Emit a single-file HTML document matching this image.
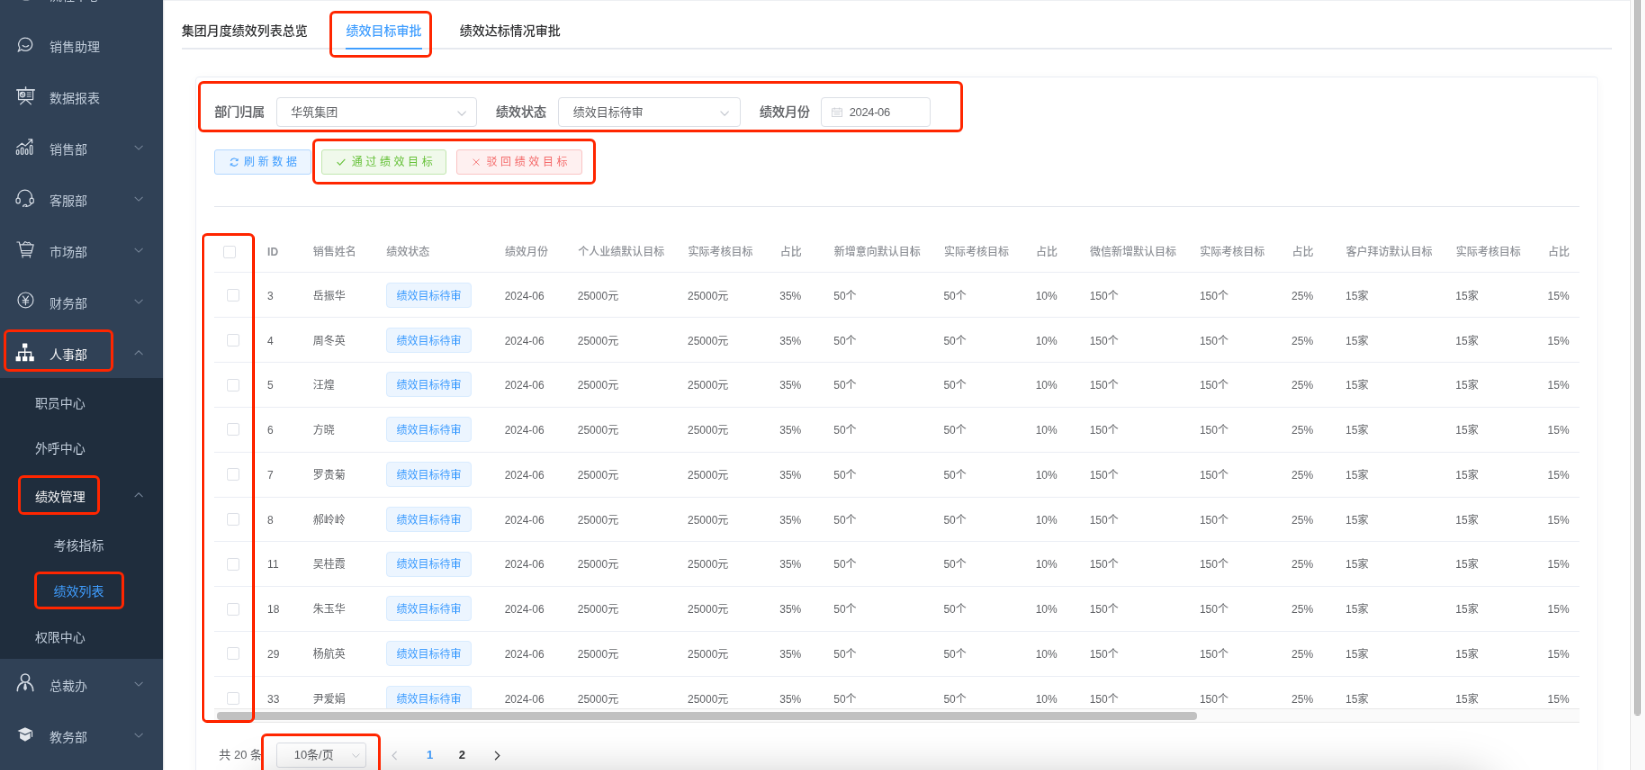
<!DOCTYPE html>
<html lang="zh-CN"><head><meta charset="utf-8"><title>绩效目标审批</title>
<style>
html,body{margin:0;padding:0}
body{will-change:transform;width:1645px;height:770px;overflow:hidden;position:relative;background:#fff;
 font-family:"Liberation Sans","Noto Sans CJK SC",sans-serif;-webkit-font-smoothing:antialiased}
div,span{box-sizing:border-box}
#zz{position:absolute;left:0;top:0;width:1827.78px;height:855.56px;transform:scale(0.9);transform-origin:0 0}
.a{position:absolute}
.t{position:absolute;white-space:nowrap}
#side{position:absolute;left:0;top:0;width:181.11px;height:855.56px;background:#304156;box-shadow:1.11px 0 2.22px rgba(0,21,41,.25);z-index:5;overflow:hidden}
#sub{position:absolute;left:0;top:420.44px;width:181.11px;height:311.11px;background:#1f2d3d}
.m{font-size:14px;color:#bfcbd9}
.m.on{color:#f4f4f5}
.m.blue{color:#409eff}
.red{position:absolute;border:3.33px solid #ff2600;border-radius:6.11px;z-index:9}
#main{position:absolute;left:181.11px;top:0;width:1630px;height:855.56px;overflow:hidden;background:#fff}
.tab{font-size:14px;font-weight:500;color:#303133}
.lab{font-size:14px;font-weight:500;color:#606266;-webkit-text-stroke:0.17px #606266}
.inp{position:absolute;border:1.11px solid #dcdfe6;border-radius:4px;background:#fff}
.it{font-size:13px;color:#606266}
.btn{position:absolute;top:166px;height:28px;border-radius:3px;border:1.11px solid}
.bt{font-size:12px;letter-spacing:3.61px}
.th{font-size:12px;font-weight:500;color:#909399}
.td{font-size:12px;color:#606266}
.tag{position:absolute;width:95.11px;height:27.78px;border:1.11px solid #d9ecff;background:#ecf5ff;border-radius:4px}
.tg{font-size:12px;color:#409eff}
.cb{position:absolute;width:14px;height:14px;border:1.11px solid #dcdfe6;border-radius:2.22px;background:#fff}
.hl{position:absolute;height:1.11px;background:#ebeef5}
</style></head>
<body>
<div id="zz">
<div id="side">
<div id="sub"></div>
<svg class="a" style="left:23.89px;top:-10px" width="10" height="10.89" viewBox="0 0 9 9.8" fill="none" stroke="#d3dae3" stroke-width="1.1" stroke-linecap="round" stroke-linejoin="round" ><rect x="0.8" y="1" width="7.4" height="7.6" rx="1"/><path d="M2.6 8.6h3.8"/></svg>
<div class="t m" style="left:55px;top:-15.78px;height:22.22px;line-height:22.22px;">流程中心</div>
<svg class="a" style="left:18.89px;top:40.56px" width="18.33" height="17.78" viewBox="0 0 16.5 16" fill="none" stroke="#d3dae3" stroke-width="1.1" stroke-linecap="round" stroke-linejoin="round" ><path d="M8.6 1.1a6.6 6.4 0 1 1 -4.2 11.5L1 14.6l1.6 -3.6A6.6 6.4 0 0 1 8.6 1.1z"/><path d="M5.6 8.6c1.6 1.6 4.2 1.6 5.8 0"/></svg>
<svg class="a" style="left:17.56px;top:96.22px" width="21.11" height="20.89" viewBox="0 0 19 18.8" fill="none" stroke="#d3dae3" stroke-width="1.1" stroke-linecap="round" stroke-linejoin="round" ><path d="M9.5 0.6v2.6" stroke-width="1.3"/><path d="M0.8 3.5h17.4" stroke-width="1.5"/><path d="M2.3 3.6v9.5h14.4V3.6M9.5 13.2l-5.2 4.6M9.5 13.2l5.2 4.6"/><circle cx="6.3" cy="8.2" r="2.4"/><path d="M6.3 8.2V5.8A2.4 2.4 0 0 0 3.9 8.2z" fill="#d3dae3" stroke="none"/><path d="M6.3 8.2h2.4M6.3 8.2v2.4" stroke-width="0.8"/><path d="M11 6.2h3.6M11 8.2h3.6M11 10.2h3.6" stroke-width="0.8"/></svg>
<svg class="a" style="left:17.33px;top:153.33px" width="20.44" height="19.33" viewBox="0 0 18.4 17.4" fill="none" stroke="#d3dae3" stroke-width="1.1" stroke-linecap="round" stroke-linejoin="round" ><path d="M1.6 9.6L6.6 5.6l3.4 2.6L16.4 2.2M13.2 1.6h3.6v3.6"/><rect x="1.2" y="12.2" width="2.3" height="4.4" rx="1.1"/><rect x="5.7" y="10" width="2.3" height="6.6" rx="1.1"/><rect x="10.2" y="11.4" width="2.3" height="5.2" rx="1.1"/><rect x="14.7" y="7.6" width="2.3" height="9" rx="1.1"/></svg>
<svg class="a" style="left:17.33px;top:209.56px" width="21.33" height="20.89" viewBox="0 0 19.2 18.8" fill="none" stroke="#d3dae3" stroke-width="1.1" stroke-linecap="round" stroke-linejoin="round" ><path d="M2.6 9.4V8A7 7 0 0 1 16.6 8v1.4"/><rect x="0.9" y="9.2" width="3.8" height="5" rx="1.8"/><rect x="14.5" y="9.2" width="3.8" height="5" rx="1.8"/><path d="M16.4 14.2c-1 2-3 3-5.4 3.2"/><ellipse cx="9.6" cy="17" rx="1.9" ry="1.2" transform="rotate(-20 9.6 17)"/></svg>
<svg class="a" style="left:17.78px;top:267.11px" width="20" height="20" viewBox="0 0 18 18" fill="none" stroke="#d3dae3" stroke-width="1.1" stroke-linecap="round" stroke-linejoin="round" ><path d="M0.8 1.8h2.2l2.6 11h9.4l2.2 -8.4H4"/><path d="M6.6 4.2l2.2 -2.8 2.6 1.2 1.4 -0.6 2 2.2" stroke-width="1"/><path d="M5.2 10.4h10.4M5.8 15h8.6M6.4 15v2.2M13.8 15v2.2" stroke-width="1"/></svg>
<svg class="a" style="left:18.89px;top:324.44px" width="18.89" height="18.89" viewBox="0 0 17 17" fill="none" stroke="#d3dae3" stroke-width="1.1" stroke-linecap="round" stroke-linejoin="round" ><circle cx="8.5" cy="8.5" r="7.6"/><path d="M5.8 4.6l2.7 3.6 2.7 -3.6M8.5 8.2v5M5.6 8.6h5.8M5.6 10.8h5.8" stroke-width="1.1"/></svg>
<svg class="a" style="left:17.33px;top:380.67px" width="21.33" height="20.89" viewBox="0 0 19.2 18.8" fill="#fff" stroke="none"><rect x="7.2" y="0.4" width="4.8" height="4.6" rx="0.5"/><rect x="0.5" y="13.4" width="4.8" height="4.8" rx="0.5"/><rect x="7.2" y="13.4" width="4.8" height="4.8" rx="0.5"/><rect x="13.9" y="13.4" width="4.8" height="4.8" rx="0.5"/><path d="M9 5h1.2v3.6h6.2v4.8h-1.2v-3.6h-5v3.6H9v-3.6H4v3.6H2.8V8.6H9z"/></svg>
<svg class="a" style="left:18.44px;top:748.44px" width="20" height="20.67" viewBox="0 0 18 18.6" fill="none" stroke="#d3dae3" stroke-width="1.1" stroke-linecap="round" stroke-linejoin="round" ><circle cx="9" cy="5" r="4.1" stroke-width="1.5"/><path d="M1.2 17.6c0 -4.6 2.4 -7.2 5.2 -8M16.8 17.6c0 -4.6 -2.4 -7.2 -5.2 -8" stroke-width="1.5"/><path d="M8.2 10.4h1.6l1 5 -1.8 2.2 -1.8 -2.2z" fill="#d3dae3" stroke="none"/></svg>
<svg class="a" style="left:19.11px;top:808px" width="17.78" height="16.67" viewBox="0 0 16 15" fill="#e3e7ec" stroke="none"><path d="M8 0.3L15.6 3.6 8 7 0.4 3.6z"/><path d="M2.8 5.6L8 8l5.2 -2.4v5.4L8 14.2 2.8 11z"/><path d="M14.4 4.2h1v5.6h-1z"/></svg>
<div class="t m" style="left:55px;top:41.22px;height:22.22px;line-height:22.22px;">销售助理</div>
<div class="t m" style="left:55px;top:98.11px;height:22.22px;line-height:22.22px;">数据报表</div>
<div class="t m" style="left:55px;top:155px;height:22.22px;line-height:22.22px;">销售部</div>
<svg class="a" style="left:149.11px;top:161px" width="10.22" height="5.89" viewBox="0 0 9.2 5.3" fill="none" stroke="#78879a" stroke-width="0.95"><polyline points="0.6,0.7 4.6,4.6 8.6,0.7"/></svg>
<div class="t m" style="left:55px;top:211.89px;height:22.22px;line-height:22.22px;">客服部</div>
<svg class="a" style="left:149.11px;top:217.89px" width="10.22" height="5.89" viewBox="0 0 9.2 5.3" fill="none" stroke="#78879a" stroke-width="0.95"><polyline points="0.6,0.7 4.6,4.6 8.6,0.7"/></svg>
<div class="t m" style="left:55px;top:268.89px;height:22.22px;line-height:22.22px;">市场部</div>
<svg class="a" style="left:149.11px;top:274.89px" width="10.22" height="5.89" viewBox="0 0 9.2 5.3" fill="none" stroke="#78879a" stroke-width="0.95"><polyline points="0.6,0.7 4.6,4.6 8.6,0.7"/></svg>
<div class="t m" style="left:55px;top:325.78px;height:22.22px;line-height:22.22px;">财务部</div>
<svg class="a" style="left:149.11px;top:331.78px" width="10.22" height="5.89" viewBox="0 0 9.2 5.3" fill="none" stroke="#78879a" stroke-width="0.95"><polyline points="0.6,0.7 4.6,4.6 8.6,0.7"/></svg>
<div class="t m on" style="left:55px;top:382.67px;height:22.22px;line-height:22.22px;">人事部</div>
<svg class="a" style="left:149.11px;top:388.67px" width="10.22" height="5.89" viewBox="0 0 9.2 5.3" fill="none" stroke="#78879a" stroke-width="0.95"><polyline points="0.6,4.6 4.6,0.7 8.6,4.6"/></svg>
<div class="t m" style="left:55px;top:750.67px;height:22.22px;line-height:22.22px;">总裁办</div>
<svg class="a" style="left:149.11px;top:756.67px" width="10.22" height="5.89" viewBox="0 0 9.2 5.3" fill="none" stroke="#78879a" stroke-width="0.95"><polyline points="0.6,0.7 4.6,4.6 8.6,0.7"/></svg>
<div class="t m" style="left:55px;top:807.89px;height:22.22px;line-height:22.22px;">教务部</div>
<svg class="a" style="left:149.11px;top:813.89px" width="10.22" height="5.89" viewBox="0 0 9.2 5.3" fill="none" stroke="#78879a" stroke-width="0.95"><polyline points="0.6,0.7 4.6,4.6 8.6,0.7"/></svg>
<div class="t m " style="left:38.89px;top:436.78px;height:22.22px;line-height:22.22px;">职员中心</div>
<div class="t m " style="left:38.89px;top:487.44px;height:22.22px;line-height:22.22px;">外呼中心</div>
<div class="t m on" style="left:38.89px;top:541.22px;height:22.22px;line-height:22.22px;">绩效管理</div>
<div class="t m " style="left:59.44px;top:595.11px;height:22.22px;line-height:22.22px;">考核指标</div>
<div class="t m blue" style="left:59.44px;top:645.67px;height:22.22px;line-height:22.22px;">绩效列表</div>
<div class="t m " style="left:38.89px;top:696.78px;height:22.22px;line-height:22.22px;">权限中心</div>
<svg class="a" style="left:149.11px;top:547.11px" width="10.22" height="5.89" viewBox="0 0 9.2 5.3" fill="none" stroke="#78879a" stroke-width="0.95"><polyline points="0.6,4.6 4.6,0.7 8.6,4.6"/></svg>
<div class="red" style="left:4.44px;top:365.56px;width:121.67px;height:47.78px"></div>
<div class="red" style="left:20px;top:527.78px;width:90.56px;height:44.44px"></div>
<div class="red" style="left:38.33px;top:635px;width:100px;height:41.67px"></div>
</div>
<div class="a" style="left:181.11px;top:0;width:1630px;height:1.11px;background:#eef0f3"></div>
<div class="t tab" style="left:201.78px;top:23.44px;height:22.22px;line-height:22.22px;">集团月度绩效列表总览</div>
<div class="t tab" style="left:384.44px;top:23.44px;height:22.22px;line-height:22.22px;color:#409eff">绩效目标审批</div>
<div class="t tab" style="left:510.67px;top:23.44px;height:22.22px;line-height:22.22px;">绩效达标情况审批</div>
<div class="a" style="left:201.78px;top:52.78px;width:1589.33px;height:2.22px;background:#e6e9ef"></div>
<div class="a" style="left:384.44px;top:52.56px;width:84.89px;height:2.33px;background:#409eff"></div>
<div class="red" style="left:366px;top:12.33px;width:114px;height:51.56px"></div>
<div class="a" style="left:217.11px;top:84.67px;width:1558.89px;height:800px;border:1.11px solid #ebeef5;border-radius:4px;box-shadow:0 2.22px 11.11px rgba(0,0,0,.04);background:#fff"></div>
<div class="t lab" style="left:238.22px;top:113.22px;height:22.22px;line-height:22.22px;">部门归属</div>
<div class="t lab" style="left:551.11px;top:113.22px;height:22.22px;line-height:22.22px;">绩效状态</div>
<div class="t lab" style="left:844px;top:113.22px;height:22.22px;line-height:22.22px;">绩效月份</div>
<div class="inp" style="left:307.11px;top:108.33px;width:222.89px;height:32.22px"></div>
<div class="inp" style="left:620px;top:108.33px;width:202.89px;height:32.22px"></div>
<div class="inp" style="left:912.44px;top:108.33px;width:121.56px;height:32.22px"></div>
<div class="t it" style="left:323.33px;top:113.56px;height:22.22px;line-height:22.22px;">华筑集团</div>
<div class="t it" style="left:636.67px;top:113.56px;height:22.22px;line-height:22.22px;">绩效目标待审</div>
<div class="t it" style="left:943.78px;top:113.56px;height:22.22px;line-height:22.22px;letter-spacing:-0.39px">2024-06</div>
<svg class="a" style="left:507.78px;top:122.89px" width="10.22" height="6" viewBox="0 0 9.2 5.4" fill="none" stroke="#c0c4cc" stroke-width="0.95"><polyline points="0.5,0.6 4.6,4.7 8.7,0.6"/></svg>
<svg class="a" style="left:799.56px;top:122.89px" width="10.22" height="6" viewBox="0 0 9.2 5.4" fill="none" stroke="#c0c4cc" stroke-width="0.95"><polyline points="0.5,0.6 4.6,4.7 8.7,0.6"/></svg>
<svg class="a" style="left:924px;top:119.11px" width="12" height="11.33" viewBox="0 0 10.8 10.2" fill="none" stroke="#c6cad1" stroke-width="0.7"><rect x="0.6" y="1.6" width="9.6" height="8"/><path d="M0.6 3.8h9.6M3 0.4v2M7.8 0.4v2M2.4 5.6h6M2.4 7.4h6" /></svg>
<div class="red" style="left:220px;top:90px;width:849.56px;height:57.11px"></div>
<div class="btn" style="left:237.78px;width:108.44px;background:#ecf5ff;border-color:#b3d8ff"></div>
<svg class="a" style="left:254.89px;top:174.89px" width="10.44" height="10.44" viewBox="0 0 9.4 9.4" fill="none" stroke="#409eff" stroke-width="0.95"><path d="M1.2 3.4A3.7 3.7 0 0 1 8 3M8.2 6A3.7 3.7 0 0 1 1.4 6.4"/><path d="M8.3 1v2.2H6.1M1.1 8.4V6.2h2.2" stroke-width="0.8"/></svg>
<div class="t bt" style="left:271.11px;top:169px;height:22.22px;line-height:22.22px;color:#409eff">刷新数据</div>
<div class="btn" style="left:356.89px;width:139.56px;background:#f0f9eb;border-color:#c2e7b0"></div>
<svg class="a" style="left:374.22px;top:175.56px" width="10" height="8.22" viewBox="0 0 9 7.4" fill="none" stroke="#67c23a" stroke-width="1"><polyline points="0.6,3.8 3.2,6.4 8.4,0.8"/></svg>
<div class="t bt" style="left:390.67px;top:169px;height:22.22px;line-height:22.22px;color:#67c23a">通过绩效目标</div>
<div class="btn" style="left:506.67px;width:140px;background:#fef0f0;border-color:#fbc4c4"></div>
<svg class="a" style="left:524.89px;top:175.78px" width="8.22" height="8.22" viewBox="0 0 7.4 7.4" fill="none" stroke="#f56c6c" stroke-width="0.8"><path d="M0.6 0.6l6.2 6.2M6.8 0.6L0.6 6.8"/></svg>
<div class="t bt" style="left:540.44px;top:169px;height:22.22px;line-height:22.22px;color:#f56c6c">驳回绩效目标</div>
<div class="red" style="left:347.11px;top:154.44px;width:315.11px;height:50.89px"></div>
<div class="hl" style="left:237.78px;top:228.89px;width:1517.11px;background:#e4e7ed"></div>
<div class="a" style="left:237.67px;top:255.56px;width:1517.22px;height:531.56px;overflow:hidden">
<div class="t th" style="left:59.44px;top:13.33px;height:22.22px;line-height:22.22px;font-weight:700">ID</div>
<div class="t th" style="left:110.11px;top:13.33px;height:22.22px;line-height:22.22px;">销售姓名</div>
<div class="t th" style="left:191.67px;top:13.33px;height:22.22px;line-height:22.22px;">绩效状态</div>
<div class="t th" style="left:323.44px;top:13.33px;height:22.22px;line-height:22.22px;">绩效月份</div>
<div class="t th" style="left:404.56px;top:13.33px;height:22.22px;line-height:22.22px;">个人业绩默认目标</div>
<div class="t th" style="left:526.78px;top:13.33px;height:22.22px;line-height:22.22px;">实际考核目标</div>
<div class="t th" style="left:629px;top:13.33px;height:22.22px;line-height:22.22px;">占比</div>
<div class="t th" style="left:689px;top:13.33px;height:22.22px;line-height:22.22px;">新增意向默认目标</div>
<div class="t th" style="left:811.22px;top:13.33px;height:22.22px;line-height:22.22px;">实际考核目标</div>
<div class="t th" style="left:913.44px;top:13.33px;height:22.22px;line-height:22.22px;">占比</div>
<div class="t th" style="left:973.44px;top:13.33px;height:22.22px;line-height:22.22px;">微信新增默认目标</div>
<div class="t th" style="left:1095.67px;top:13.33px;height:22.22px;line-height:22.22px;">实际考核目标</div>
<div class="t th" style="left:1197.89px;top:13.33px;height:22.22px;line-height:22.22px;">占比</div>
<div class="t th" style="left:1257.89px;top:13.33px;height:22.22px;line-height:22.22px;">客户拜访默认目标</div>
<div class="t th" style="left:1380.11px;top:13.33px;height:22.22px;line-height:22.22px;">实际考核目标</div>
<div class="t th" style="left:1482.33px;top:13.33px;height:22.22px;line-height:22.22px;">占比</div>
<div class="cb" style="left:10.33px;top:17.22px"></div>
<div class="hl" style="left:0;top:46.67px;width:1555.56px"></div>
<div class="cb" style="left:14.67px;top:65.56px"></div>
<div class="t td" style="left:59.44px;top:62.11px;height:22.22px;line-height:22.22px;">3</div>
<div class="t td" style="left:110.11px;top:62.11px;height:22.22px;line-height:22.22px;">岳振华</div>
<div class="tag" style="left:191.22px;top:58.89px"></div>
<div class="t tg" style="left:202.78px;top:62.11px;height:22.22px;line-height:22.22px;">绩效目标待审</div>
<div class="t td" style="left:323px;top:62.11px;height:22.22px;line-height:22.22px;">2024-06</div>
<div class="t td" style="left:404.11px;top:62.11px;height:22.22px;line-height:22.22px;">25000元</div>
<div class="t td" style="left:526.33px;top:62.11px;height:22.22px;line-height:22.22px;">25000元</div>
<div class="t td" style="left:628.56px;top:62.11px;height:22.22px;line-height:22.22px;">35%</div>
<div class="t td" style="left:688.56px;top:62.11px;height:22.22px;line-height:22.22px;">50个</div>
<div class="t td" style="left:810.78px;top:62.11px;height:22.22px;line-height:22.22px;">50个</div>
<div class="t td" style="left:913px;top:62.11px;height:22.22px;line-height:22.22px;">10%</div>
<div class="t td" style="left:973px;top:62.11px;height:22.22px;line-height:22.22px;">150个</div>
<div class="t td" style="left:1095.22px;top:62.11px;height:22.22px;line-height:22.22px;">150个</div>
<div class="t td" style="left:1197.44px;top:62.11px;height:22.22px;line-height:22.22px;">25%</div>
<div class="t td" style="left:1257.44px;top:62.11px;height:22.22px;line-height:22.22px;">15家</div>
<div class="t td" style="left:1379.67px;top:62.11px;height:22.22px;line-height:22.22px;">15家</div>
<div class="t td" style="left:1481.89px;top:62.11px;height:22.22px;line-height:22.22px;">15%</div>
<div class="hl" style="left:0;top:96.56px;width:1555.56px"></div>
<div class="cb" style="left:14.67px;top:115.33px"></div>
<div class="t td" style="left:59.44px;top:112px;height:22.22px;line-height:22.22px;">4</div>
<div class="t td" style="left:110.11px;top:112px;height:22.22px;line-height:22.22px;">周冬英</div>
<div class="tag" style="left:191.22px;top:108.89px"></div>
<div class="t tg" style="left:202.78px;top:112px;height:22.22px;line-height:22.22px;">绩效目标待审</div>
<div class="t td" style="left:323px;top:112px;height:22.22px;line-height:22.22px;">2024-06</div>
<div class="t td" style="left:404.11px;top:112px;height:22.22px;line-height:22.22px;">25000元</div>
<div class="t td" style="left:526.33px;top:112px;height:22.22px;line-height:22.22px;">25000元</div>
<div class="t td" style="left:628.56px;top:112px;height:22.22px;line-height:22.22px;">35%</div>
<div class="t td" style="left:688.56px;top:112px;height:22.22px;line-height:22.22px;">50个</div>
<div class="t td" style="left:810.78px;top:112px;height:22.22px;line-height:22.22px;">50个</div>
<div class="t td" style="left:913px;top:112px;height:22.22px;line-height:22.22px;">10%</div>
<div class="t td" style="left:973px;top:112px;height:22.22px;line-height:22.22px;">150个</div>
<div class="t td" style="left:1095.22px;top:112px;height:22.22px;line-height:22.22px;">150个</div>
<div class="t td" style="left:1197.44px;top:112px;height:22.22px;line-height:22.22px;">25%</div>
<div class="t td" style="left:1257.44px;top:112px;height:22.22px;line-height:22.22px;">15家</div>
<div class="t td" style="left:1379.67px;top:112px;height:22.22px;line-height:22.22px;">15家</div>
<div class="t td" style="left:1481.89px;top:112px;height:22.22px;line-height:22.22px;">15%</div>
<div class="hl" style="left:0;top:146.33px;width:1555.56px"></div>
<div class="cb" style="left:14.67px;top:165.11px"></div>
<div class="t td" style="left:59.44px;top:161.78px;height:22.22px;line-height:22.22px;">5</div>
<div class="t td" style="left:110.11px;top:161.78px;height:22.22px;line-height:22.22px;">汪煌</div>
<div class="tag" style="left:191.22px;top:157.78px"></div>
<div class="t tg" style="left:202.78px;top:161.78px;height:22.22px;line-height:22.22px;">绩效目标待审</div>
<div class="t td" style="left:323px;top:161.78px;height:22.22px;line-height:22.22px;">2024-06</div>
<div class="t td" style="left:404.11px;top:161.78px;height:22.22px;line-height:22.22px;">25000元</div>
<div class="t td" style="left:526.33px;top:161.78px;height:22.22px;line-height:22.22px;">25000元</div>
<div class="t td" style="left:628.56px;top:161.78px;height:22.22px;line-height:22.22px;">35%</div>
<div class="t td" style="left:688.56px;top:161.78px;height:22.22px;line-height:22.22px;">50个</div>
<div class="t td" style="left:810.78px;top:161.78px;height:22.22px;line-height:22.22px;">50个</div>
<div class="t td" style="left:913px;top:161.78px;height:22.22px;line-height:22.22px;">10%</div>
<div class="t td" style="left:973px;top:161.78px;height:22.22px;line-height:22.22px;">150个</div>
<div class="t td" style="left:1095.22px;top:161.78px;height:22.22px;line-height:22.22px;">150个</div>
<div class="t td" style="left:1197.44px;top:161.78px;height:22.22px;line-height:22.22px;">25%</div>
<div class="t td" style="left:1257.44px;top:161.78px;height:22.22px;line-height:22.22px;">15家</div>
<div class="t td" style="left:1379.67px;top:161.78px;height:22.22px;line-height:22.22px;">15家</div>
<div class="t td" style="left:1481.89px;top:161.78px;height:22.22px;line-height:22.22px;">15%</div>
<div class="hl" style="left:0;top:196.22px;width:1555.56px"></div>
<div class="cb" style="left:14.67px;top:214.89px"></div>
<div class="t td" style="left:59.44px;top:211.44px;height:22.22px;line-height:22.22px;">6</div>
<div class="t td" style="left:110.11px;top:211.44px;height:22.22px;line-height:22.22px;">方晓</div>
<div class="tag" style="left:191.22px;top:207.78px"></div>
<div class="t tg" style="left:202.78px;top:211.44px;height:22.22px;line-height:22.22px;">绩效目标待审</div>
<div class="t td" style="left:323px;top:211.44px;height:22.22px;line-height:22.22px;">2024-06</div>
<div class="t td" style="left:404.11px;top:211.44px;height:22.22px;line-height:22.22px;">25000元</div>
<div class="t td" style="left:526.33px;top:211.44px;height:22.22px;line-height:22.22px;">25000元</div>
<div class="t td" style="left:628.56px;top:211.44px;height:22.22px;line-height:22.22px;">35%</div>
<div class="t td" style="left:688.56px;top:211.44px;height:22.22px;line-height:22.22px;">50个</div>
<div class="t td" style="left:810.78px;top:211.44px;height:22.22px;line-height:22.22px;">50个</div>
<div class="t td" style="left:913px;top:211.44px;height:22.22px;line-height:22.22px;">10%</div>
<div class="t td" style="left:973px;top:211.44px;height:22.22px;line-height:22.22px;">150个</div>
<div class="t td" style="left:1095.22px;top:211.44px;height:22.22px;line-height:22.22px;">150个</div>
<div class="t td" style="left:1197.44px;top:211.44px;height:22.22px;line-height:22.22px;">25%</div>
<div class="t td" style="left:1257.44px;top:211.44px;height:22.22px;line-height:22.22px;">15家</div>
<div class="t td" style="left:1379.67px;top:211.44px;height:22.22px;line-height:22.22px;">15家</div>
<div class="t td" style="left:1481.89px;top:211.44px;height:22.22px;line-height:22.22px;">15%</div>
<div class="hl" style="left:0;top:246.11px;width:1555.56px"></div>
<div class="cb" style="left:14.67px;top:264.67px"></div>
<div class="t td" style="left:59.44px;top:261.33px;height:22.22px;line-height:22.22px;">7</div>
<div class="t td" style="left:110.11px;top:261.33px;height:22.22px;line-height:22.22px;">罗贵菊</div>
<div class="tag" style="left:191.22px;top:257.78px"></div>
<div class="t tg" style="left:202.78px;top:261.33px;height:22.22px;line-height:22.22px;">绩效目标待审</div>
<div class="t td" style="left:323px;top:261.33px;height:22.22px;line-height:22.22px;">2024-06</div>
<div class="t td" style="left:404.11px;top:261.33px;height:22.22px;line-height:22.22px;">25000元</div>
<div class="t td" style="left:526.33px;top:261.33px;height:22.22px;line-height:22.22px;">25000元</div>
<div class="t td" style="left:628.56px;top:261.33px;height:22.22px;line-height:22.22px;">35%</div>
<div class="t td" style="left:688.56px;top:261.33px;height:22.22px;line-height:22.22px;">50个</div>
<div class="t td" style="left:810.78px;top:261.33px;height:22.22px;line-height:22.22px;">50个</div>
<div class="t td" style="left:913px;top:261.33px;height:22.22px;line-height:22.22px;">10%</div>
<div class="t td" style="left:973px;top:261.33px;height:22.22px;line-height:22.22px;">150个</div>
<div class="t td" style="left:1095.22px;top:261.33px;height:22.22px;line-height:22.22px;">150个</div>
<div class="t td" style="left:1197.44px;top:261.33px;height:22.22px;line-height:22.22px;">25%</div>
<div class="t td" style="left:1257.44px;top:261.33px;height:22.22px;line-height:22.22px;">15家</div>
<div class="t td" style="left:1379.67px;top:261.33px;height:22.22px;line-height:22.22px;">15家</div>
<div class="t td" style="left:1481.89px;top:261.33px;height:22.22px;line-height:22.22px;">15%</div>
<div class="hl" style="left:0;top:296px;width:1555.56px"></div>
<div class="cb" style="left:14.67px;top:314.44px"></div>
<div class="t td" style="left:59.44px;top:311.11px;height:22.22px;line-height:22.22px;">8</div>
<div class="t td" style="left:110.11px;top:311.11px;height:22.22px;line-height:22.22px;">郝岭岭</div>
<div class="tag" style="left:191.22px;top:307.78px"></div>
<div class="t tg" style="left:202.78px;top:311.11px;height:22.22px;line-height:22.22px;">绩效目标待审</div>
<div class="t td" style="left:323px;top:311.11px;height:22.22px;line-height:22.22px;">2024-06</div>
<div class="t td" style="left:404.11px;top:311.11px;height:22.22px;line-height:22.22px;">25000元</div>
<div class="t td" style="left:526.33px;top:311.11px;height:22.22px;line-height:22.22px;">25000元</div>
<div class="t td" style="left:628.56px;top:311.11px;height:22.22px;line-height:22.22px;">35%</div>
<div class="t td" style="left:688.56px;top:311.11px;height:22.22px;line-height:22.22px;">50个</div>
<div class="t td" style="left:810.78px;top:311.11px;height:22.22px;line-height:22.22px;">50个</div>
<div class="t td" style="left:913px;top:311.11px;height:22.22px;line-height:22.22px;">10%</div>
<div class="t td" style="left:973px;top:311.11px;height:22.22px;line-height:22.22px;">150个</div>
<div class="t td" style="left:1095.22px;top:311.11px;height:22.22px;line-height:22.22px;">150个</div>
<div class="t td" style="left:1197.44px;top:311.11px;height:22.22px;line-height:22.22px;">25%</div>
<div class="t td" style="left:1257.44px;top:311.11px;height:22.22px;line-height:22.22px;">15家</div>
<div class="t td" style="left:1379.67px;top:311.11px;height:22.22px;line-height:22.22px;">15家</div>
<div class="t td" style="left:1481.89px;top:311.11px;height:22.22px;line-height:22.22px;">15%</div>
<div class="hl" style="left:0;top:345.78px;width:1555.56px"></div>
<div class="cb" style="left:14.67px;top:364.22px"></div>
<div class="t td" style="left:59.44px;top:360.89px;height:22.22px;line-height:22.22px;">11</div>
<div class="t td" style="left:110.11px;top:360.89px;height:22.22px;line-height:22.22px;">吴桂霞</div>
<div class="tag" style="left:191.22px;top:357.78px"></div>
<div class="t tg" style="left:202.78px;top:360.89px;height:22.22px;line-height:22.22px;">绩效目标待审</div>
<div class="t td" style="left:323px;top:360.89px;height:22.22px;line-height:22.22px;">2024-06</div>
<div class="t td" style="left:404.11px;top:360.89px;height:22.22px;line-height:22.22px;">25000元</div>
<div class="t td" style="left:526.33px;top:360.89px;height:22.22px;line-height:22.22px;">25000元</div>
<div class="t td" style="left:628.56px;top:360.89px;height:22.22px;line-height:22.22px;">35%</div>
<div class="t td" style="left:688.56px;top:360.89px;height:22.22px;line-height:22.22px;">50个</div>
<div class="t td" style="left:810.78px;top:360.89px;height:22.22px;line-height:22.22px;">50个</div>
<div class="t td" style="left:913px;top:360.89px;height:22.22px;line-height:22.22px;">10%</div>
<div class="t td" style="left:973px;top:360.89px;height:22.22px;line-height:22.22px;">150个</div>
<div class="t td" style="left:1095.22px;top:360.89px;height:22.22px;line-height:22.22px;">150个</div>
<div class="t td" style="left:1197.44px;top:360.89px;height:22.22px;line-height:22.22px;">25%</div>
<div class="t td" style="left:1257.44px;top:360.89px;height:22.22px;line-height:22.22px;">15家</div>
<div class="t td" style="left:1379.67px;top:360.89px;height:22.22px;line-height:22.22px;">15家</div>
<div class="t td" style="left:1481.89px;top:360.89px;height:22.22px;line-height:22.22px;">15%</div>
<div class="hl" style="left:0;top:395.67px;width:1555.56px"></div>
<div class="cb" style="left:14.67px;top:414px"></div>
<div class="t td" style="left:59.44px;top:410.67px;height:22.22px;line-height:22.22px;">18</div>
<div class="t td" style="left:110.11px;top:410.67px;height:22.22px;line-height:22.22px;">朱玉华</div>
<div class="tag" style="left:191.22px;top:406.67px"></div>
<div class="t tg" style="left:202.78px;top:410.67px;height:22.22px;line-height:22.22px;">绩效目标待审</div>
<div class="t td" style="left:323px;top:410.67px;height:22.22px;line-height:22.22px;">2024-06</div>
<div class="t td" style="left:404.11px;top:410.67px;height:22.22px;line-height:22.22px;">25000元</div>
<div class="t td" style="left:526.33px;top:410.67px;height:22.22px;line-height:22.22px;">25000元</div>
<div class="t td" style="left:628.56px;top:410.67px;height:22.22px;line-height:22.22px;">35%</div>
<div class="t td" style="left:688.56px;top:410.67px;height:22.22px;line-height:22.22px;">50个</div>
<div class="t td" style="left:810.78px;top:410.67px;height:22.22px;line-height:22.22px;">50个</div>
<div class="t td" style="left:913px;top:410.67px;height:22.22px;line-height:22.22px;">10%</div>
<div class="t td" style="left:973px;top:410.67px;height:22.22px;line-height:22.22px;">150个</div>
<div class="t td" style="left:1095.22px;top:410.67px;height:22.22px;line-height:22.22px;">150个</div>
<div class="t td" style="left:1197.44px;top:410.67px;height:22.22px;line-height:22.22px;">25%</div>
<div class="t td" style="left:1257.44px;top:410.67px;height:22.22px;line-height:22.22px;">15家</div>
<div class="t td" style="left:1379.67px;top:410.67px;height:22.22px;line-height:22.22px;">15家</div>
<div class="t td" style="left:1481.89px;top:410.67px;height:22.22px;line-height:22.22px;">15%</div>
<div class="hl" style="left:0;top:445.56px;width:1555.56px"></div>
<div class="cb" style="left:14.67px;top:463.78px"></div>
<div class="t td" style="left:59.44px;top:460.44px;height:22.22px;line-height:22.22px;">29</div>
<div class="t td" style="left:110.11px;top:460.44px;height:22.22px;line-height:22.22px;">杨航英</div>
<div class="tag" style="left:191.22px;top:456.67px"></div>
<div class="t tg" style="left:202.78px;top:460.44px;height:22.22px;line-height:22.22px;">绩效目标待审</div>
<div class="t td" style="left:323px;top:460.44px;height:22.22px;line-height:22.22px;">2024-06</div>
<div class="t td" style="left:404.11px;top:460.44px;height:22.22px;line-height:22.22px;">25000元</div>
<div class="t td" style="left:526.33px;top:460.44px;height:22.22px;line-height:22.22px;">25000元</div>
<div class="t td" style="left:628.56px;top:460.44px;height:22.22px;line-height:22.22px;">35%</div>
<div class="t td" style="left:688.56px;top:460.44px;height:22.22px;line-height:22.22px;">50个</div>
<div class="t td" style="left:810.78px;top:460.44px;height:22.22px;line-height:22.22px;">50个</div>
<div class="t td" style="left:913px;top:460.44px;height:22.22px;line-height:22.22px;">10%</div>
<div class="t td" style="left:973px;top:460.44px;height:22.22px;line-height:22.22px;">150个</div>
<div class="t td" style="left:1095.22px;top:460.44px;height:22.22px;line-height:22.22px;">150个</div>
<div class="t td" style="left:1197.44px;top:460.44px;height:22.22px;line-height:22.22px;">25%</div>
<div class="t td" style="left:1257.44px;top:460.44px;height:22.22px;line-height:22.22px;">15家</div>
<div class="t td" style="left:1379.67px;top:460.44px;height:22.22px;line-height:22.22px;">15家</div>
<div class="t td" style="left:1481.89px;top:460.44px;height:22.22px;line-height:22.22px;">15%</div>
<div class="hl" style="left:0;top:495.33px;width:1555.56px"></div>
<div class="cb" style="left:14.67px;top:513.56px"></div>
<div class="t td" style="left:59.44px;top:510.22px;height:22.22px;line-height:22.22px;">33</div>
<div class="t td" style="left:110.11px;top:510.22px;height:22.22px;line-height:22.22px;">尹爱娟</div>
<div class="tag" style="left:191.22px;top:506.67px"></div>
<div class="t tg" style="left:202.78px;top:510.22px;height:22.22px;line-height:22.22px;">绩效目标待审</div>
<div class="t td" style="left:323px;top:510.22px;height:22.22px;line-height:22.22px;">2024-06</div>
<div class="t td" style="left:404.11px;top:510.22px;height:22.22px;line-height:22.22px;">25000元</div>
<div class="t td" style="left:526.33px;top:510.22px;height:22.22px;line-height:22.22px;">25000元</div>
<div class="t td" style="left:628.56px;top:510.22px;height:22.22px;line-height:22.22px;">35%</div>
<div class="t td" style="left:688.56px;top:510.22px;height:22.22px;line-height:22.22px;">50个</div>
<div class="t td" style="left:810.78px;top:510.22px;height:22.22px;line-height:22.22px;">50个</div>
<div class="t td" style="left:913px;top:510.22px;height:22.22px;line-height:22.22px;">10%</div>
<div class="t td" style="left:973px;top:510.22px;height:22.22px;line-height:22.22px;">150个</div>
<div class="t td" style="left:1095.22px;top:510.22px;height:22.22px;line-height:22.22px;">150个</div>
<div class="t td" style="left:1197.44px;top:510.22px;height:22.22px;line-height:22.22px;">25%</div>
<div class="t td" style="left:1257.44px;top:510.22px;height:22.22px;line-height:22.22px;">15家</div>
<div class="t td" style="left:1379.67px;top:510.22px;height:22.22px;line-height:22.22px;">15家</div>
<div class="t td" style="left:1481.89px;top:510.22px;height:22.22px;line-height:22.22px;">15%</div>
<div class="hl" style="left:0;top:545.22px;width:1555.56px"></div>
</div>
<div class="a" style="left:237.67px;top:787.11px;width:1517.22px;height:15.78px;background:#fafafa;border-top:1.11px solid #e8e8e8;border-bottom:1.11px solid #e8e8e8"></div>
<div class="a" style="left:241.11px;top:791.44px;width:1088.89px;height:8.11px;border-radius:4px;background:#c1c1c1"></div>
<div class="red" style="left:224.44px;top:258.89px;width:58.44px;height:544.11px"></div>
<div class="t it" style="left:243.33px;top:828.22px;height:22.22px;line-height:22.22px;">共 20 条</div>
<div class="inp" style="left:306.67px;top:824.89px;width:100.67px;height:28.22px;border-radius:3px"></div>
<div class="t it" style="left:326.67px;top:828.22px;height:22.22px;line-height:22.22px;">10条/页</div>
<svg class="a" style="left:391.11px;top:836.67px" width="8.89" height="5.22" viewBox="0 0 9.2 5.4" fill="none" stroke="#c0c4cc" stroke-width="0.95"><polyline points="0.5,0.6 4.6,4.7 8.7,0.6"/></svg>
<div class="red" style="left:290px;top:814.78px;width:132.89px;height:57.44px"></div>
<svg class="a" style="left:434.89px;top:834px" width="6.67" height="11.11" viewBox="0 0 6 10" fill="none" stroke="#c0c4cc" stroke-width="1.05"><polyline points="5,0.8 1,5 5,9.2"/></svg>
<div class="t it" style="left:474px;top:828.22px;height:22.22px;line-height:22.22px;font-weight:700;color:#409eff">1</div>
<div class="t it" style="left:509.78px;top:828.22px;height:22.22px;line-height:22.22px;font-weight:700;color:#303133">2</div>
<svg class="a" style="left:549.33px;top:834px" width="7.11" height="11.11" viewBox="0 0 6.4 10" fill="none" stroke="#303133" stroke-width="1.1"><polyline points="1,0.8 5.2,5 1,9.2"/></svg>
<div class="a" style="left:283.33px;top:866.67px;width:1372.22px;height:66.67px;border-radius:22.22px;box-shadow:0 0 54.44px 0 rgba(0,0,0,.27);z-index:4"></div>
<div class="a" style="left:1811.11px;top:0;width:16.67px;height:855.56px;background:#fafafa;border-left:1.11px solid #e8e8e8;z-index:8"></div>
<div class="a" style="left:1815.56px;top:-22.22px;width:7.78px;height:817.11px;border-radius:3.89px;background:#c1c1c1;z-index:8"></div>
</div>
</body></html>
